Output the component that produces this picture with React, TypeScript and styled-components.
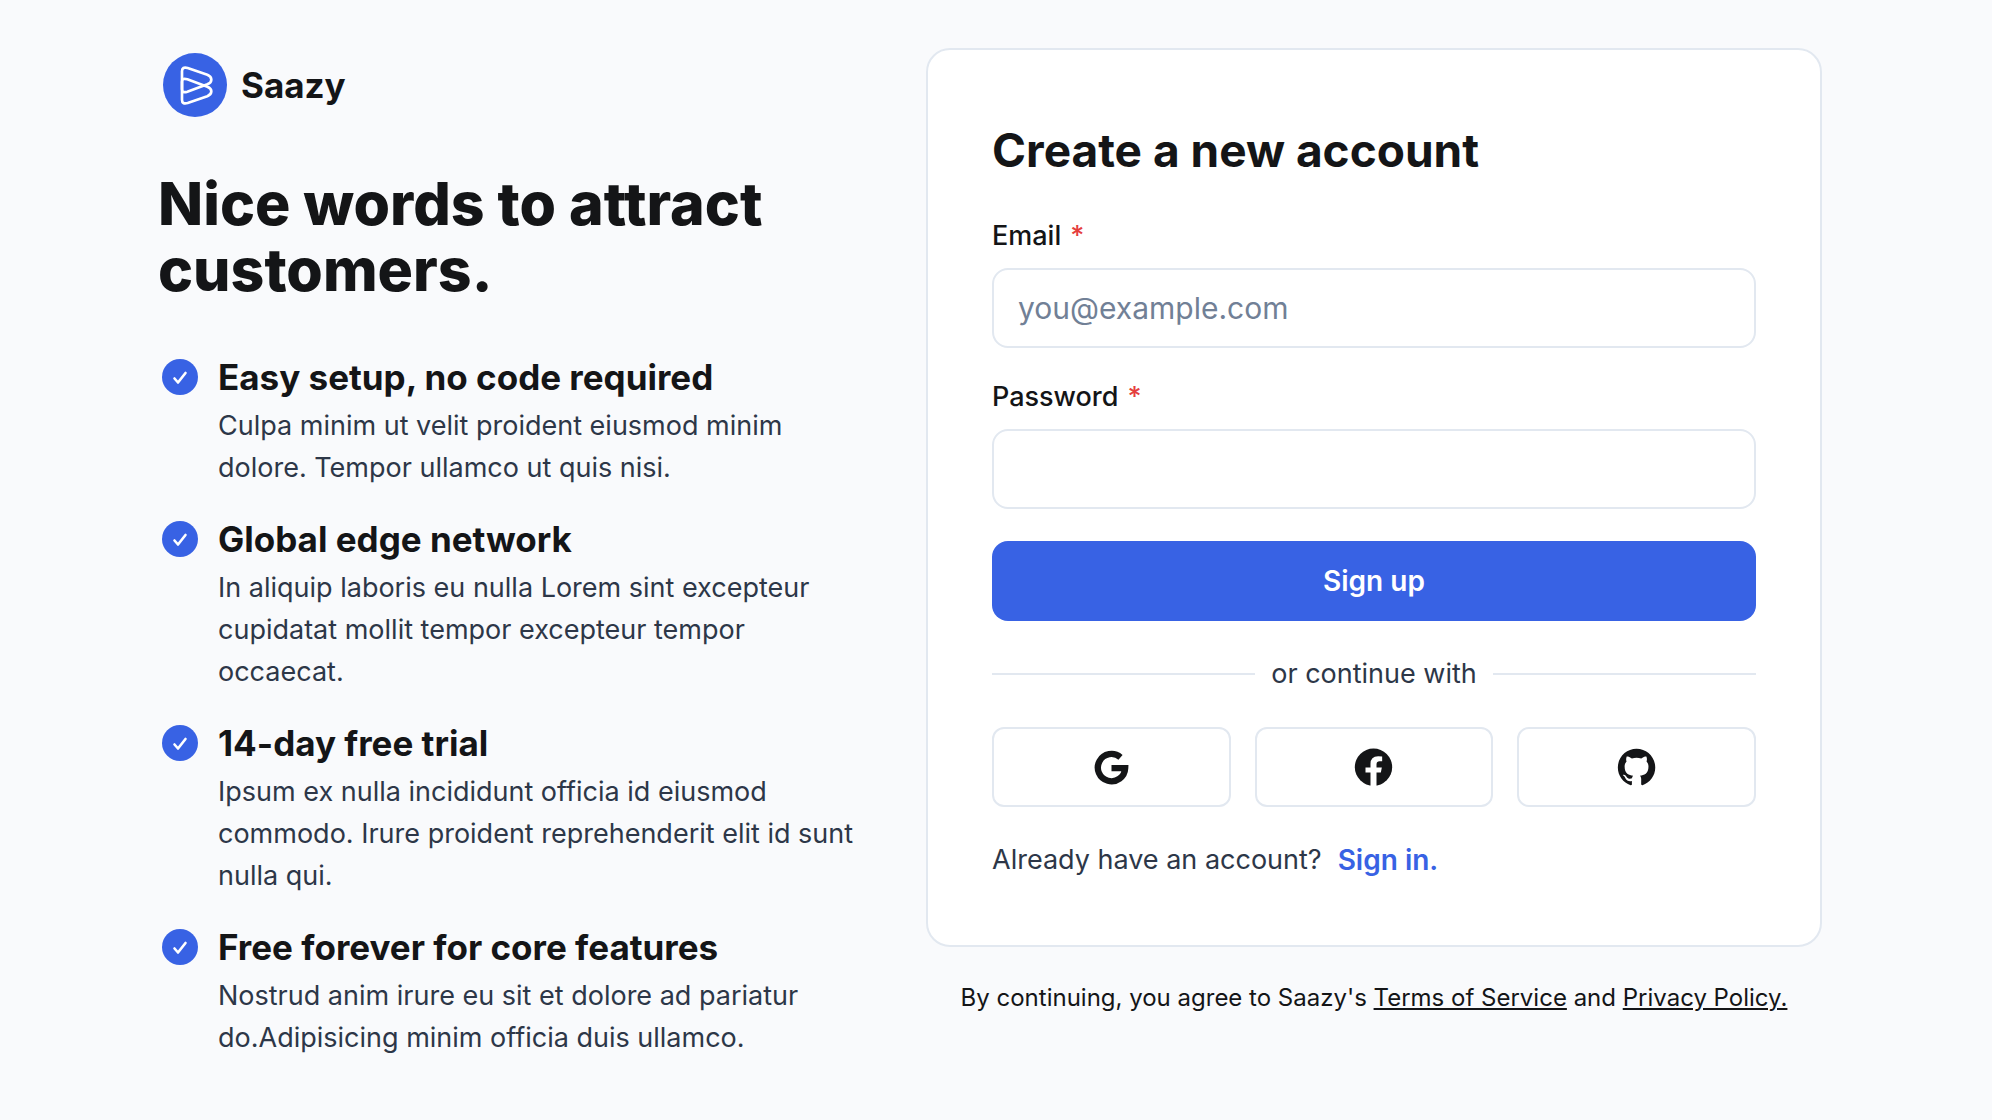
import React from "react";
import styled, { createGlobalStyle } from "styled-components";
import { BiLogoGithub } from "react-icons/bi";

const color = {
  page: "#f9fafc",
  panel: "#ffffff",
  line: "#e2e8f0",
  ink: "#141517",
  body: "#2d3748",
  hint: "#718096",
  brand: "#3862e4",
  danger: "#e53e3e",
};

const GlobalStyle = createGlobalStyle`
  *, *::before, *::after { box-sizing: border-box; }
  body {
    margin: 0;
    background: ${color.page};
    color: ${color.ink};
    font-family: Inter, "Liberation Sans", sans-serif;
    font-size: 27px;
    line-height: 42px;
    -webkit-font-smoothing: antialiased;
  }
`;

const Page = styled.main`
  display: grid;
  grid-template-columns: minmax(0, 704fr) minmax(0, 896fr);
  gap: 64px;
  align-items: start;
  max-width: 1664px;
  margin: 0 auto;
  padding: 48px 0;
`;

const Shell = styled.div`
  padding-right: 12px;
`;

const Brand = styled.div`
  display: flex;
  align-items: center;
  gap: 9px;
  font-size: 35px;
  font-weight: 700;
`;

const BrandMark = styled.svg`
  display: block;
  width: 74px;
  height: 74px;
`;

const Headline = styled.h1`
  margin: 49px 0 50px;
  font-size: 59px;
  line-height: 66px;
  font-weight: 800;
`;

const FeatureList = styled.ul`
  display: grid;
  gap: 26px;
  margin: 0;
  padding: 0;
  list-style: none;
`;

const FeatureItem = styled.li`
  display: grid;
  grid-template-columns: 44px minmax(0, 1fr);
  column-gap: 16px;
`;

const FeatureIcon = styled.svg`
  display: block;
  width: 44px;
  height: 48px;
`;

const FeatureTitle = styled.h2`
  margin: 0 0 4px;
  font-size: 35px;
  line-height: 48px;
  font-weight: 700;
`;

const FeatureText = styled.p`
  margin: 0;
  color: ${color.body};
`;

const Card = styled.section`
  padding: 64px;
  border: 2px solid ${color.line};
  border-radius: 24px;
  background: ${color.panel};
`;

const CardTitle = styled.h2`
  margin: 0 0 32px;
  font-size: 46px;
  line-height: 73px;
  font-weight: 700;
`;

const Form = styled.form`
  display: grid;
  gap: 32px;
`;

const Field = styled.div`
  display: grid;
  gap: 16px;
`;

const Label = styled.label`
  line-height: 33px;
  font-weight: 500;
`;

const Required = styled.span`
  margin-left: 9px;
  color: ${color.danger};
`;

const TextInput = styled.input`
  width: 100%;
  height: 80px;
  padding: 0 24px;
  border: 2px solid ${color.line};
  border-radius: 16px;
  background: transparent;
  color: ${color.ink};
  font: inherit;
  font-size: 30px;

  &::placeholder {
    color: ${color.hint};
    opacity: 1;
  }
`;

const SubmitButton = styled.button`
  height: 80px;
  border: 0;
  border-radius: 16px;
  background: ${color.brand};
  color: #ffffff;
  font: inherit;
  font-size: 28px;
  font-weight: 600;
  cursor: pointer;
`;

const Divider = styled.div`
  display: flex;
  align-items: center;
  gap: 16px;
  margin: 32px 0;
  color: ${color.body};

  &::before,
  &::after {
    content: "";
    flex: 1;
    height: 2px;
    background: ${color.line};
  }
`;

const SocialRow = styled.div`
  display: grid;
  grid-template-columns: repeat(3, minmax(0, 1fr));
  gap: 24px;
`;

const SocialButton = styled.button`
  display: flex;
  align-items: center;
  justify-content: center;
  height: 80px;
  padding: 0;
  border: 2px solid ${color.line};
  border-radius: 12px;
  background: transparent;
  color: ${color.ink};
  cursor: pointer;

  svg {
    width: 45px;
    height: 45px;
  }
`;

const SignInLine = styled.p`
  display: flex;
  gap: 16px;
  margin: 32px 0 0;
  color: ${color.body};
`;

const SignInLink = styled.a`
  color: ${color.brand};
  font-size: 28px;
  font-weight: 600;
  text-decoration: none;
`;

const Terms = styled.p`
  margin: 32px 0 0;
  font-size: 24px;
  line-height: 38px;
  text-align: center;
`;

const TermsLink = styled.a`
  color: inherit;
  text-decoration: underline;
`;

function Logo() {
  return (
    <BrandMark viewBox="54 54 222 222" aria-hidden="true">
      <circle cx="165" cy="165" r="96" fill={color.brand} />
      <g fill="none" stroke="#ffffff" strokeWidth="8" strokeLinejoin="round">
        <path d="M126 178V124Q126 109 143 114L202 134Q214 139 214 149Q214 158 202 163L142 185Q126 190 126 178Z" />
        <path d="M126 155V209Q126 224 143 219L202 199Q214 194 214 184Q214 175 202 170L142 148Q126 143 126 155Z" />
      </g>
    </BrandMark>
  );
}

function Check() {
  return (
    <FeatureIcon viewBox="0 0 44 48" aria-hidden="true">
      <circle cx="22" cy="24" r="18" fill={color.brand} />
      <path
        d="M16.5 25.5L20 29.5L27.5 20"
        fill="none"
        stroke="#ffffff"
        strokeWidth="2.6"
        strokeLinecap="round"
        strokeLinejoin="round"
      />
    </FeatureIcon>
  );
}

function GoogleIcon() {
  return (
    <svg viewBox="27.5 74.5 135 135" aria-hidden="true">
      <path d="M122 111.5A41 41 0 1 0 136 144H95" fill="none" stroke="currentColor" strokeWidth="19" />
    </svg>
  );
}

function FacebookIcon() {
  return (
    <svg viewBox="94.5 73.5 135 135" aria-hidden="true">
      <circle cx="162" cy="140" r="56" fill="currentColor" />
      <path
        d="M153 198V156H138V141H153V130Q153 107 176 107L188 108V122H180Q171 122 171 132V141H187L184 156H171V198Z"
        fill={color.panel}
      />
    </svg>
  );
}

const features = [
  {
    title: "Easy setup, no code required",
    text: "Culpa minim ut velit proident eiusmod minim dolore. Tempor ullamco ut quis nisi.",
  },
  {
    title: "Global edge network",
    text: "In aliquip laboris eu nulla Lorem sint excepteur cupidatat mollit tempor excepteur tempor occaecat.",
  },
  {
    title: "14-day free trial",
    text: "Ipsum ex nulla incididunt officia id eiusmod commodo. Irure proident reprehenderit elit id sunt nulla qui.",
  },
  {
    title: "Free forever for core features",
    text: "Nostrud anim irure eu sit et dolore ad pariatur do.Adipisicing minim officia duis ullamco.",
  },
];

const providers = [
  { name: "Google", Icon: GoogleIcon },
  { name: "Facebook", Icon: FacebookIcon },
  { name: "GitHub", Icon: BiLogoGithub },
];

export default function App() {
  return (
    <Shell>
      <GlobalStyle />
      <Page>
        <div>
          <Brand>
            <Logo />
            <span>Saazy</span>
          </Brand>
          <Headline>Nice words to attract customers.</Headline>
          <FeatureList>
            {features.map((feature) => (
              <FeatureItem key={feature.title}>
                <Check />
                <div>
                  <FeatureTitle>{feature.title}</FeatureTitle>
                  <FeatureText>{feature.text}</FeatureText>
                </div>
              </FeatureItem>
            ))}
          </FeatureList>
        </div>
        <div>
          <Card>
            <CardTitle>Create a new account</CardTitle>
            <Form onSubmit={(event) => event.preventDefault()}>
              <Field>
                <Label htmlFor="email">
                  Email<Required>*</Required>
                </Label>
                <TextInput id="email" type="email" placeholder="you@example.com" required />
              </Field>
              <Field>
                <Label htmlFor="password">
                  Password<Required>*</Required>
                </Label>
                <TextInput id="password" type="password" required />
              </Field>
              <SubmitButton type="submit">Sign up</SubmitButton>
            </Form>
            <Divider>or continue with</Divider>
            <SocialRow>
              {providers.map(({ name, Icon }) => (
                <SocialButton key={name} type="button" aria-label={name}>
                  <Icon />
                </SocialButton>
              ))}
            </SocialRow>
            <SignInLine>
              Already have an account?
              <SignInLink href="#signin">Sign in.</SignInLink>
            </SignInLine>
          </Card>
          <Terms>
            By continuing, you agree to Saazy's <TermsLink href="#terms">Terms of Service</TermsLink> and{" "}
            <TermsLink href="#privacy">Privacy Policy.</TermsLink>
          </Terms>
        </div>
      </Page>
    </Shell>
  );
}
